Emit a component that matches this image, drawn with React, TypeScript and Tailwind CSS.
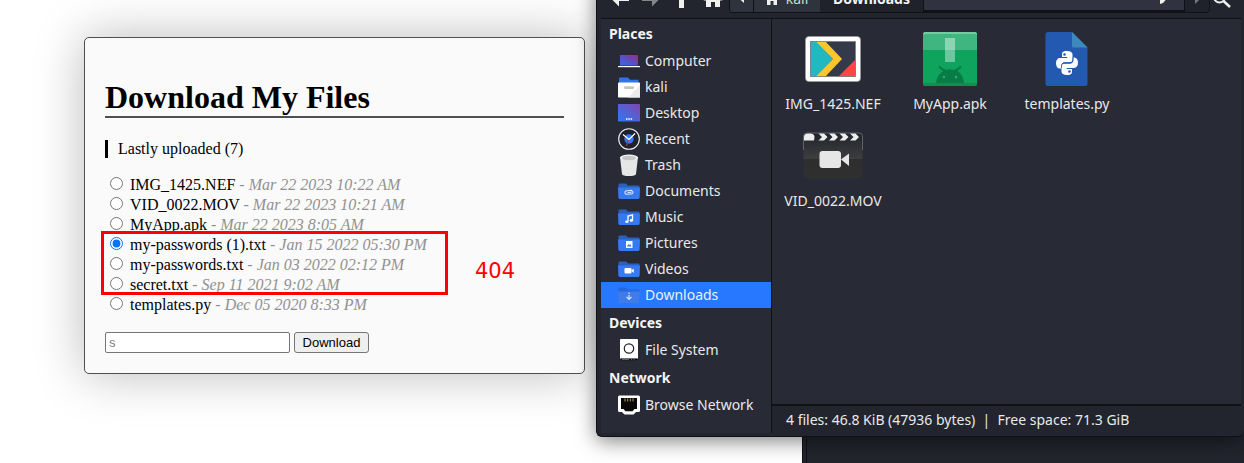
import type { ReactNode } from "react";

type Upload = { name: string; date: string; checked?: boolean };

const uploads: Upload[] = [
  { name: "IMG_1425.NEF", date: "Mar 22 2023 10:22 AM" },
  { name: "VID_0022.MOV", date: "Mar 22 2023 10:21 AM" },
  { name: "MyApp.apk", date: "Mar 22 2023 8:05 AM" },
  { name: "my-passwords (1).txt", date: "Jan 15 2022 05:30 PM", checked: true },
  { name: "my-passwords.txt", date: "Jan 03 2022 02:12 PM" },
  { name: "secret.txt", date: "Sep 11 2021 9:02 AM" },
  { name: "templates.py", date: "Dec 05 2020 8:33 PM" },
];

function SmallIcon({ children }: { children: ReactNode }) {
  return (
    <svg viewBox="0 0 22 22" className="size-[22px] shrink-0" aria-hidden="true">
      {children}
    </svg>
  );
}

function Folder({ children, faded }: { children: ReactNode; faded?: boolean }) {
  return (
    <SmallIcon>
      <g>
        <path d="M.5 18V4.5Q.5 3.5 1.500 3.500H8L10 5.500H20.500Q21.500 5.500 21.500 6.500V18Z" fill={faded ? "#2567dd" : "#2b60bd"} />
        <path d="M0 7.500H22L21.500 17.500Q21.500 19 20 19H2Q.5 19 .5 17.500Z" fill={faded ? "#3f7cea" : "#357af2"} />
        {children}
      </g>
    </SmallIcon>
  );
}

const ComputerIcon = (
  <SmallIcon>
    <defs>
      <linearGradient id="screen" x1="0" y1="1" x2="1" y2="0">
        <stop offset="0" stopColor="#3c6be6" />
        <stop offset=".5" stopColor="#5a4fc0" />
        <stop offset="1" stopColor="#9c2c7a" />
      </linearGradient>
    </defs>
    <rect x="2" y="5" width="18" height="10.500" fill="url(#screen)" />
    <rect x="0" y="16" width="22" height="1.200" fill="#fff" />
  </SmallIcon>
);

const HomeFolderIcon = (
  <SmallIcon>
    <path d="M1 8V2.500Q1 1.500 2 1.500H10L12 3.800H20.500V8Z" fill="#2f74ea" />
    <rect x="0" y="6.500" width="22" height="15" rx=".7" fill="#fff" />
    <path d="M22 9V21.500H10Z" fill="#ececec" />
    <rect x="6" y="10.300" width="10" height="2.600" rx="1.200" fill="#c4c4c4" />
  </SmallIcon>
);

const DesktopIcon = (
  <SmallIcon>
    <defs>
      <linearGradient id="desk" x1="0" y1="1" x2="1" y2="0">
        <stop offset="0" stopColor="#2c7af5" />
        <stop offset="1" stopColor="#8046ae" />
      </linearGradient>
    </defs>
    <rect x="0" y="2" width="22" height="17.500" rx=".6" fill="url(#desk)" />
    <path d="M8 17h1.500M10.300 17h1.500M12.600 17h1.500" stroke="#fff" strokeWidth="1.600" />
  </SmallIcon>
);

const RecentIcon = (
  <SmallIcon>
    <circle cx="11" cy="11" r="10.300" fill="#1f222c" stroke="#f2f2f2" strokeWidth="1.100" />
    <circle cx="11" cy="11" r="4.700" fill="#3478f5" />
    <path d="M10.500 11.500 8.500 18" stroke="#c0303a" strokeWidth="1.200" />
    <path d="M5 6.500 11 11.500 17 5.500" fill="none" stroke="#fff" strokeWidth="1.200" />
  </SmallIcon>
);

const TrashIcon = (
  <SmallIcon>
    <path d="M2 3H20L18 20Q17.500 22 11 22T4 20Z" fill="#e6e6e6" />
    <ellipse cx="11" cy="3.500" rx="9" ry="3" fill="#f4f4f4" />
    <ellipse cx="11" cy="4" rx="7" ry="2.300" fill="#c6c6c6" />
  </SmallIcon>
);

const DocumentsIcon = (
  <Folder>
    <path d="M14 10.500H9Q6.800 10.500 6.800 12.300T9 14.200H13Q15 14.200 15 12.500T13 10.800M13.500 12.400H9.500" fill="none" stroke="#dce8ff" strokeWidth="1" transform="rotate(-4 11 12)" />
  </Folder>
);

const MusicIcon = (
  <Folder>
    <path d="M10 15.500V10L14.500 8.800V14" fill="none" stroke="#fff" strokeWidth="1.300" />
    <ellipse cx="8.900" cy="15.700" rx="1.700" ry="1.300" fill="#fff" />
    <ellipse cx="13.400" cy="14.400" rx="1.700" ry="1.300" fill="#fff" />
  </Folder>
);

const PicturesIcon = (
  <Folder>
    <rect x="8" y="9" width="6.500" height="7" fill="#fff" />
    <path d="M9 14.500 10.500 12 11.500 13 12.500 12.200 13.500 14.500Z" fill="#357af2" />
  </Folder>
);

const VideosIcon = (
  <Folder>
    <rect x="6.500" y="10" width="7" height="5.500" rx="1" fill="#fff" />
    <path d="M13 12.500 15.800 10.800V15Z" fill="#fff" />
  </Folder>
);

const DownloadsIcon = (
  <Folder faded>
    <path d="M11 8.500V10M11 11V15M8.500 12.800 11 15.300 13.500 12.800" fill="none" stroke="#d7e5ff" strokeWidth="1.200" />
  </Folder>
);

const DriveIcon = (
  <SmallIcon>
    <rect x="2" y="0" width="18" height="20" rx="1" fill="#fff" />
    <circle cx="11" cy="9.500" r="4.700" fill="none" stroke="#222" strokeWidth="1.200" />
    <path d="M2.500 20.300H19.500" stroke="#0c0c0e" strokeWidth="1.800" />
    <path d="M4 20.300H11M13 20.300h1M15.500 20.300h1" stroke="#777" strokeWidth="1" />
  </SmallIcon>
);

const NetworkIcon = (
  <SmallIcon>
    <path d="M1.500 1.500H20.500Q22 1.500 22 3V16.500Q22 18 20.500 18H18L15.500 20.500H6.500L4 18H1.500Q0 18 0 16.500V3Q0 1.500 1.500 1.500Z" fill="#fff" />
    <path d="M3 4H19V15H16.500L14.500 17.200H7.500L5.500 15H3Z" fill="#080808" />
    <path d="M7 4.500V7.500M9.700 4.500V7.500M12.300 4.500V7.500M15 4.500V7.500" stroke="#b99b55" strokeWidth="1" />
  </SmallIcon>
);

const places: { label: string; icon: ReactNode; active?: boolean }[] = [
  { label: "Computer", icon: ComputerIcon },
  { label: "kali", icon: HomeFolderIcon },
  { label: "Desktop", icon: DesktopIcon },
  { label: "Recent", icon: RecentIcon },
  { label: "Trash", icon: TrashIcon },
  { label: "Documents", icon: DocumentsIcon },
  { label: "Music", icon: MusicIcon },
  { label: "Pictures", icon: PicturesIcon },
  { label: "Videos", icon: VideosIcon },
  { label: "Downloads", icon: DownloadsIcon, active: true },
];

function FileIcon({ children }: { children: ReactNode }) {
  return (
    <svg viewBox="0 0 60 56" className="h-14 w-[60px]" aria-hidden="true">
      {children}
    </svg>
  );
}

const files: { name: string; icon: ReactNode }[] = [
  {
    name: "IMG_1425.NEF",
    icon: (
      <FileIcon>
        <rect x="2.500" y="5.500" width="55" height="45" rx="3.500" fill="#fff" stroke="#9a9b9f" strokeWidth=".7" />
        <rect x="7.500" y="10.500" width="45" height="35" fill="#353a4a" />
        <path d="M7.500 10.500H14L30 28 14 45.500H7.500Z" fill="#22b8c2" />
        <path d="M13 10.500H22.500L39 28 22.500 45.500H13L30 28Z" fill="#ffc62c" />
        <path d="M52.500 28.500V45.500H35.500Z" fill="#ff4545" />
        <rect x="7.500" y="10.500" width="45" height="35" fill="none" stroke="#777d85" strokeWidth=".7" />
      </FileIcon>
    ),
  },
  {
    name: "MyApp.apk",
    icon: (
      <FileIcon>
        <rect x="3" y="1" width="54" height="54" rx="2.500" fill="#0ea45e" />
        <path d="M3 19V3.500Q3 1 5.500 1H54.500Q57 1 57 3.500V19Z" fill="#3fb580" />
        <path d="M3 4V3.500Q3 1 5.500 1H54.500Q57 1 57 3.500V4Q57 3 54.500 3H5.500Q3 3 3 4Z" fill="#72cca1" />
        <path d="M3 52H57V52.500Q57 55 54.500 55H5.500Q3 55 3 52.500Z" fill="#0b904f" />
        <rect x="25" y="7" width="10" height="24" fill="#6cc79e" />
        <rect x="25" y="7" width="10" height="12" fill="#8bd5b2" />
        <path d="M16 52Q17 43 24 39.800L19 36.800 20 35.800 26 39Q30 37.700 34 39L40 35.800 41 36.800 37 39.800Q43 43 44 52Z" fill="#087c47" />
        <path d="M23.500 39.500 19.500 36M36.500 39.500 40.500 36" stroke="#087c47" strokeWidth="2" strokeLinecap="round" />
        <circle cx="24" cy="46" r="1.200" fill="#35ad72" />
        <circle cx="36" cy="46" r="1.200" fill="#35ad72" />
      </FileIcon>
    ),
  },
  {
    name: "templates.py",
    icon: (
      <FileIcon>
        <path d="M11 1H35L50.500 16.500V52.500Q50.500 55 48 55H11Q8.500 55 8.500 52.500V3.500Q8.500 1 11 1Z" fill="#2459b2" />
        <path d="M35 1 50.500 16.500H36.500Q35 16.500 35 15Z" fill="#3c8abd" />
        <g transform="translate(19 20)" fill="#fff">
          <path d="M10.800 0C6.500 0 6 1.700 6 3.500V6H11.200V7H4C1.600 7 0 9 0 12.200S1.500 17.500 3.600 17.500H5.400V14.700C5.400 12.500 7 11.200 8.900 11.200H14C15.500 11.200 16.500 10 16.500 8.500V3.500C16.500 1.200 14.600 0 10.800 0Z" />
          <path d="M11.200 24C15.500 24 16 22.300 16 20.500V18H10.800V17H18C20.400 17 22 15 22 11.800S20.500 6.500 18.400 6.500H17.300V9.300C17.300 11.500 16 12.800 13.900 12.800H8C6.500 12.800 5.500 14 5.500 15.500V20.500C5.500 22.800 7.400 24 11.200 24Z" />
          <path d="M5.500 17V14.700C5.500 12.800 6.800 11.800 8.900 11.800H14.200C15.900 11.800 17 10.600 17 8.500V6.500" fill="none" stroke="#2459b2" strokeWidth=".9" />
          <circle cx="8.500" cy="3.500" r="1.300" fill="#2459b2" />
          <circle cx="13.500" cy="20.500" r="1.300" fill="#2459b2" />
        </g>
      </FileIcon>
    ),
  },
  {
    name: "VID_0022.MOV",
    icon: (
      <FileIcon>
        <defs>
          <linearGradient id="clap" x1="0" y1="0" x2="0" y2="1">
            <stop offset="0" stopColor="#20242c" />
            <stop offset=".57" stopColor="#3e3e3f" />
            <stop offset=".58" stopColor="#2e2e2e" />
            <stop offset="1" stopColor="#303030" />
          </linearGradient>
        </defs>
        <rect x=".5" y="5" width="59" height="45.500" rx="4" fill="url(#clap)" />
        <path d="M.5 22V8Q.5 5 4 5H56Q59.500 5 59.500 8V22" fill="none" stroke="#777a7e" strokeWidth=".7" />
        <path d="M1 12V9Q1 5.500 5 5.500H8Q11.500 6 11.500 9L11 12.500H1Z" fill="#eee" />
        <path d="M15.500 5.500H21L24.500 9 21 12.500H15.500L19 9Z M26 5.500H31.500L35 9 31.500 12.500H26L29.500 9Z M36.500 5.500H42L45.500 9 42 12.500H36.500L40 9Z M47 5.500H52.500L56 9 52.500 12.500H47L50.500 9Z" fill="#eee" />
        <rect x="16.500" y="23" width="21.500" height="17" rx="3" fill="#e6e6e6" />
        <path d="M38 31.500 46 25.500V38Z" fill="#e6e6e6" />
      </FileIcon>
    ),
  },
];

function SideRow({ label, icon, active }: { label: string; icon: ReactNode; active?: boolean }) {
  return (
    <a
      href="#"
      className={
        active
          ? "flex h-[26px] items-center gap-[5px] bg-[#2777ff] pl-[17px] text-[#e8f0ff]"
          : "flex h-[26px] items-center gap-[5px] pl-[17px]"
      }
    >
      {icon}
      <span className="whitespace-nowrap">{label}</span>
    </a>
  );
}

function SideHeading({ children }: { children: ReactNode }) {
  return <h2 className="flex h-[29px] items-center pl-2 font-bold text-[#f4f4f5]">{children}</h2>;
}

function ToolbarButton({ label, children }: { label: string; children: ReactNode }) {
  return (
    <button type="button" aria-label={label} className="h-7 w-[31px]">
      <svg viewBox="0 0 31 28" className="h-7 w-[31px]" fill="none">
        {children}
      </svg>
    </button>
  );
}

function DownloadPage() {
  return (
    <section className="rounded-[5px] border border-[#4f4f4f] bg-[#fafafa] p-5 font-['Liberation_Serif',serif] text-base text-black shadow-[0_0_50px_rgba(0,0,0,0.27)]">
      <h1 className="mt-[21px] border-b-2 border-[#4f4f4f] text-[32px] leading-[37px] font-bold">Download My Files</h1>
      <p className="mt-[22px] border-l-3 border-black pl-2.5 leading-[18px]">Lastly uploaded (7)</p>
      <form onSubmit={(event) => event.preventDefault()}>
        <div className="relative mt-4">
          <ul>
            {uploads.map((file) => (
              <li key={file.name} className="h-5">
                <label className="flex items-start gap-[7px] pl-[5px] leading-[22px]">
                  <input type="radio" name="file" defaultChecked={file.checked} className="mt-[3px] size-[13px]" />
                  <span className="whitespace-nowrap">
                    {file.name} <span className="text-[#919191]">- <i>{file.date}</i></span>
                  </span>
                </label>
              </li>
            ))}
          </ul>
          <div className="pointer-events-none absolute top-[57px] -left-1 flex items-center gap-[27px]">
            <div className="h-16 w-[347px] border-3 border-[#ff0000]" />
            <span className="pt-4 font-['DejaVu_Sans',sans-serif] text-[21px] leading-8 text-[#ff0000]">404</span>
          </div>
        </div>
        <div className="mt-[18px] flex gap-1 font-['Liberation_Sans',sans-serif] text-[13px]">
          <input
            type="text"
            aria-label="File name"
            placeholder="s"
            className="h-[21px] w-[185px] rounded-[2px] border border-[#767676] bg-white px-[3px] placeholder:text-[#808080]"
          />
          <button type="submit" className="h-[21px] w-[75px] rounded-[3px] border border-[#767676] bg-[#efefef]">
            Download
          </button>
        </div>
      </form>
    </section>
  );
}

function FileManager() {
  return (
    <section className="relative -mt-5 flex flex-col rounded-b-[6px] border-b border-l border-[#0f1116] bg-[#22252d] pr-[3px] pb-[3px] pl-1 font-['Noto_Sans',sans-serif] text-sm text-[#e9e9ea] shadow-[0_4px_20px_rgba(0,0,0,0.5)]">
      <header className="flex h-[39px] items-start border-b border-[#101216] pt-[5px]">
        <div className="flex pl-1">
          <ToolbarButton label="Back">
            <path d="M24 14H12" stroke="#f0f0ee" strokeWidth="4" />
            <path d="M6 13.500 14 6V21.500Z" fill="#f0f0ee" />
          </ToolbarButton>
          <ToolbarButton label="Forward">
            <path d="M6 14H18" stroke="#86878a" strokeWidth="4" />
            <path d="M24 13.500 16 6V21.500Z" fill="#86878a" />
          </ToolbarButton>
          <ToolbarButton label="Up">
            <path d="M14.500 8V23" stroke="#f0f0ee" strokeWidth="5" />
            <path d="M6.500 11 14.500 3 22.500 11Z" fill="#f0f0ee" />
          </ToolbarButton>
          <ToolbarButton label="Home">
            <path d="M15 5 5.500 15.500H8V22H13V17H17V22H22V15.500H24.500Z" fill="#f0f0ee" />
          </ToolbarButton>
        </div>
        <nav aria-label="Path" className="flex h-7 flex-1 overflow-hidden rounded-b-[4px] border border-[#101218] bg-[#1f222a]">
          <button type="button" aria-label="Scroll path left" className="flex w-6 items-center justify-center border-r border-[#101218] bg-[#2f333e]">
            <svg viewBox="0 0 8 12" className="h-3 w-2" fill="#eee">
              <path d="M6 1V10L1 5.500Z" />
            </svg>
          </button>
          <button type="button" className="flex w-[66px] items-center justify-center gap-2 bg-[#2f333e] text-[#d3d6dc]">
            <svg viewBox="0 0 12 12" className="size-3" fill="#eee">
              <path d="M6 0 0 6H1V12H4.500V8H7.500V12H11V6H12Z" />
            </svg>
            kali
          </button>
          <button type="button" className="flex w-[103px] items-center justify-center bg-[#1f222a] font-bold text-[#f4f4f5]">
            Downloads
          </button>
          <button type="button" aria-label="Edit path" className="flex flex-1 items-center justify-end border-x border-b-2 border-[#101218] bg-[#30333f] pr-3.5">
            <svg viewBox="0 0 12 14" className="h-3.5 w-3" fill="#f0f0e8">
              <path d="M2 9 9 1 12 4 5 12 2 13Z" />
            </svg>
          </button>
          <button type="button" aria-label="Scroll path right" className="flex w-6 items-center justify-center">
            <svg viewBox="0 0 8 12" className="h-3 w-2" fill="#777a80">
              <path d="M2 1V11L7 6Z" />
            </svg>
          </button>
        </nav>
        <ToolbarButton label="Search">
          <circle cx="9.500" cy="12" r="5.500" stroke="#eee" strokeWidth="2" />
          <path d="M13.500 16 20 22" stroke="#eee" strokeWidth="2.500" />
        </ToolbarButton>
      </header>
      <div className="flex bg-[#282a35]">
        <aside className="w-[171px] shrink-0 border-r border-[#0f1116] pb-[15px]">
          <SideHeading>Places</SideHeading>
          {places.map((place) => (
            <SideRow key={place.label} {...place} />
          ))}
          <SideHeading>Devices</SideHeading>
          <SideRow label="File System" icon={DriveIcon} />
          <SideHeading>Network</SideHeading>
          <SideRow label="Browse Network" icon={NetworkIcon} />
        </aside>
        <div className="flex flex-1 flex-col">
          <ul className="grid flex-1 grid-cols-[repeat(auto-fill,112px)] content-start gap-x-[5px] gap-y-3 pt-3 pr-20 pl-[5px]">
            {files.map((file) => (
              <li key={file.name} className="flex flex-col items-center gap-[5px] leading-6">
                {file.icon}
                <span className="whitespace-nowrap">{file.name}</span>
              </li>
            ))}
          </ul>
          <footer className="h-[29px] border-t-2 border-[#101216] bg-[#22252d] pl-3.5 leading-[27px] whitespace-pre">
            4 files: 46.8 KiB (47936 bytes)&nbsp; |&nbsp; Free space: 71.3 GiB
          </footer>
        </div>
      </div>
    </section>
  );
}

export default function App() {
  return (
    <main className="relative min-h-screen overflow-hidden bg-white">
      <div className="absolute right-0 bottom-0 h-10 w-[442px] border-l border-[#0f1116] bg-[#22252d] pl-[3px]">
        <div className="h-full border-l border-[#0f1116]" />
      </div>
      <div className="grid grid-cols-[585fr_648fr] items-start gap-[11px]">
        <div className="pt-[37px] pl-[84px]">
          <DownloadPage />
        </div>
        <FileManager />
      </div>
    </main>
  );
}
